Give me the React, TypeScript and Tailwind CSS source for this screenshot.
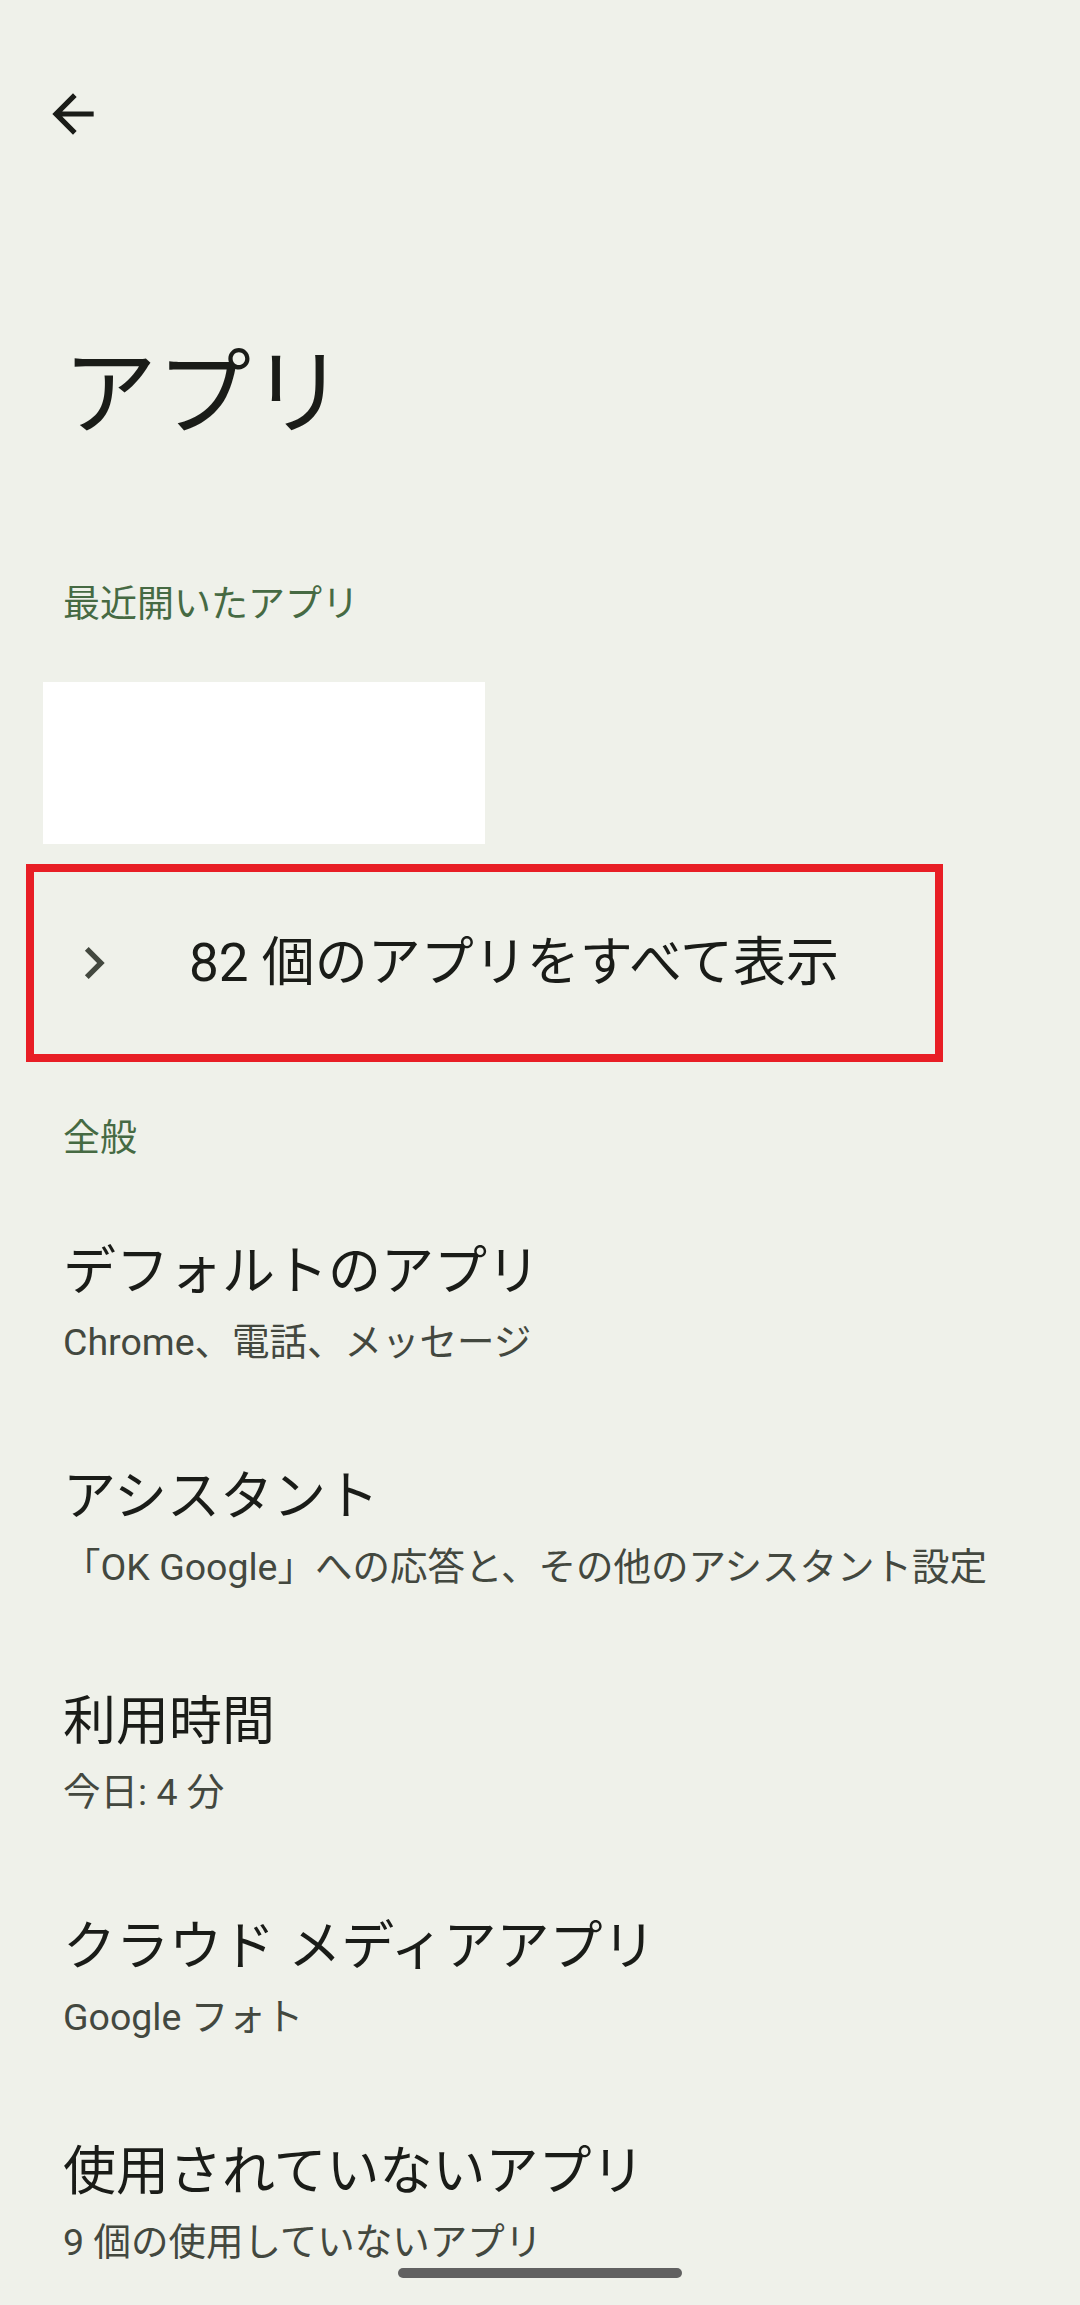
const items = [
  { title: "デフォルトのアプリ", sub: "Chrome、電話、メッセージ" },
  { title: "アシスタント", sub: "「OK Google」への応答と、その他のアシスタント設定" },
  { title: "利用時間", sub: "今日: 4 分" },
  { title: "クラウド メディアアプリ", sub: "Google フォト" },
  { title: "使用されていないアプリ", sub: "9 個の使用していないアプリ" },
];

function BackArrow() {
  return (
    <svg viewBox="0 0 24 24" className="w-[62px] h-[62px] text-[#1a1c18]" fill="currentColor">
      <path d="M20 11H7.83l5.59-5.59L12 4l-8 8 8 8 1.41-1.41L7.83 13H20v-2z" />
    </svg>
  );
}

function Chevron() {
  return (
    <svg viewBox="0 0 24 24" className="w-[64px] h-[64px] text-[#43483f]" fill="currentColor">
      <path d="M10 6L8.59 7.41 13.17 12l-4.58 4.59L10 18l6-6z" />
    </svg>
  );
}

export default function App() {
  return (
    <div
      className="relative h-[2305px] w-[1080px] overflow-hidden bg-[#eff1ea]"
      style={{ fontFamily: 'Roboto, "Noto Sans CJK JP", sans-serif' }}
    >
      <div className="pt-[83px] pl-[42px]">
        <BackArrow />
      </div>

      <h1 className="mt-[203px] pl-[63px] text-[94px] leading-[94px] font-normal text-[#1a1c18]">アプリ</h1>

      <div className="mt-[144px] pl-[63px] text-[37px] leading-[37px] text-[#466a43]">最近開いたアプリ</div>

      <div className="mt-[59px] ml-[43px] w-[442px] h-[162px] bg-white" />

      <div className="mt-[20px] ml-[26px] w-[917px] h-[198px] border-[8px] border-[#e81e25] flex items-center">
        <div className="ml-[28px]">
          <Chevron />
        </div>
        <span className="ml-[63px] text-[53px] leading-[53px] text-[#1a1c18]">82 個のアプリをすべて表示</span>
      </div>

      <div className="mt-[58px] pl-[63px] text-[37px] leading-[37px] text-[#466a43]">全般</div>

      <div className="mt-[89px] flex flex-col gap-[110px] pl-[63px]">
        {items.map((it) => (
          <div key={it.title} className="flex flex-col">
            <div className="text-[53px] leading-[53px] text-[#1a1c18]">{it.title}</div>
            <div className="mt-[25px] text-[37.5px] leading-[37px] text-[#43483f]">{it.sub}</div>
          </div>
        ))}
      </div>

      <div className="absolute bottom-[27px] left-[398px] w-[284px] h-[10px] rounded-full bg-[#616161]" />
    </div>
  );
}
